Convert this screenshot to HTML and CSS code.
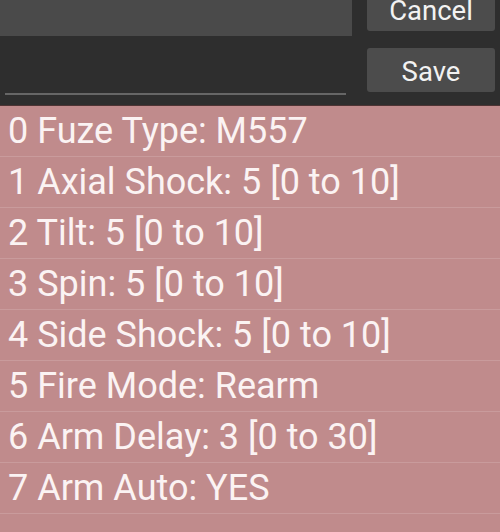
FILE: index.html
```html
<!DOCTYPE html>
<html>
<head>
<meta charset="utf-8">
<link rel="stylesheet" href="styles.css">
</head>
<body>
<div class="top">
  <div class="left">
    <div class="field"></div>
    <div class="underline"></div>
  </div>
  <div class="buttons">
    <div class="btn cancel">Cancel</div>
    <div class="btn save">Save</div>
  </div>
</div>
<ul class="list">
  <li>0 Fuze Type: M557</li>
  <li>1 Axial Shock: 5 [0 to 10]</li>
  <li>2 Tilt: 5 [0 to 10]</li>
  <li>3 Spin: 5 [0 to 10]</li>
  <li>4 Side Shock: 5 [0 to 10]</li>
  <li>5 Fire Mode: Rearm</li>
  <li>6 Arm Delay: 3 [0 to 30]</li>
  <li>7 Arm Auto: YES</li>
</ul>
</body>
</html>
```
FILE: styles.css
```css
html, body {
  margin: 0;
  padding: 0;
  width: 500px;
  height: 532px;
  overflow: hidden;
  font-family: Roboto, "Noto Sans", sans-serif;
}
body {
  background: #c08b8c;
}
.top {
  height: 105px;
  background: #2e2e2e;
  display: flex;
  border-bottom: 1px solid #4e3434;
}
.left {
  width: 352px;
  display: flex;
  flex-direction: column;
}
.field {
  height: 36px;
  background: #4a4a4a;
}
.underline {
  margin: 57px 6px 0 5px;
  height: 2px;
  background: #666;
}
.buttons {
  margin-left: 15px;
  width: 128px;
  display: flex;
  flex-direction: column;
}
.btn {
  background: #4c4c4c;
  border-radius: 3px;
  color: #f2f2f2;
  font-size: 27.5px;
  height: 44px;
  box-sizing: border-box;
  padding-top: 3px;
  display: flex;
  justify-content: center;
  align-items: center;
}
.cancel {
  margin-top: -13px;
}
.save {
  margin-top: 17px;
}
.list {
  list-style: none;
  margin: 0;
  padding: 0;
}
.list li {
  height: 50px;
  box-sizing: content-box;
  border-bottom: 1.4px solid #c99b9c;
  display: flex;
  align-items: center;
  padding-left: 8px;
  color: #fbf3f3;
  font-size: 36px;
}
```
